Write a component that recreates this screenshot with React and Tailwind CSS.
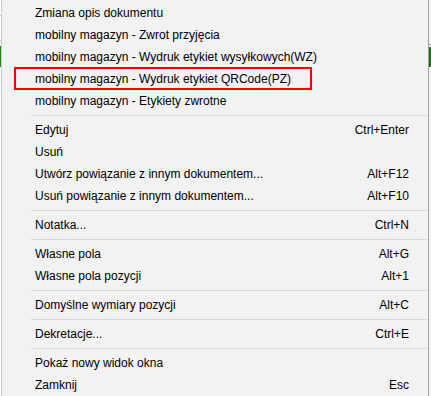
import React from 'react';

const groups = [
    [
        { label: 'Zmiana opis dokumentu' },
        { label: 'mobilny magazyn - Zwrot przyjęcia' },
        { label: 'mobilny magazyn - Wydruk etykiet wysyłkowych(WZ)' },
        { label: 'mobilny magazyn - Wydruk etykiet QRCode(PZ)' },
        { label: 'mobilny magazyn - Etykiety zwrotne' },
    ],
    [
        { label: 'Edytuj', shortcut: 'Ctrl+Enter' },
        { label: 'Usuń' },
        { label: 'Utwórz powiązanie z innym dokumentem...', shortcut: 'Alt+F12' },
        { label: 'Usuń powiązanie z innym dokumentem...', shortcut: 'Alt+F10' },
    ],
    [{ label: 'Notatka...', shortcut: 'Ctrl+N' }],
    [
        { label: 'Własne pola', shortcut: 'Alt+G' },
        { label: 'Własne pola pozycji', shortcut: 'Alt+1' },
    ],
    [{ label: 'Domyślne wymiary pozycji', shortcut: 'Alt+C' }],
    [{ label: 'Dekretacje...', shortcut: 'Ctrl+E' }],
    [
        { label: 'Pokaż nowy widok okna' },
        { label: 'Zamknij', shortcut: 'Esc' },
    ],
];

const MenuItem = ({ label, shortcut }) => (
    <div className="flex h-[22px] items-center justify-between pl-[33px] pr-[19px] text-black">
        <span className="whitespace-nowrap">{label}</span>
        {shortcut && <span className="whitespace-nowrap">{shortcut}</span>}
    </div>
);

const Separator = () => (
    <div className="h-[7px] pt-[3px] pl-[29px] pr-[1px]">
        <div className="h-px bg-[#d7d7d7]" />
    </div>
);

export default function App() {
    return (
        <div
            className="relative flex h-[396px] w-[431px] overflow-hidden bg-white text-[12px]"
            style={{ fontFamily: '"Liberation Sans", Arial, sans-serif' }}
        >
            {/* background app, left edge */}
            <div className="flex w-px flex-col bg-white">
                <div className="mt-[15px] h-px bg-[#c8c8c8]" />
                <div className="mt-[24px] h-px bg-[#c8c8c8]" />
                <div className="mt-[5px] h-[21px] bg-[#1e8a1e]" />
            </div>

            {/* context menu */}
            <div className="flex-1 border-l border-r border-l-[#cccccc] border-r-[#a0a0a0] bg-[#f2f2f2] pt-[2px]">
                {groups.map((group, gi) => (
                    <div key={gi}>
                        {gi > 0 && <Separator />}
                        {group.map((item) => (
                            <MenuItem key={item.label} {...item} />
                        ))}
                    </div>
                ))}
            </div>

            {/* background app, right edge */}
            <div className="flex w-[2px] flex-col bg-[#f7f7f7]">
                <div className="mt-[44px] h-px bg-[#a0a0a0]" />
                <div className="mt-[2px] h-[20px] bg-[#1e6e1e]" />
            </div>

            {/* annotation */}
            <div className="pointer-events-none absolute left-[14px] top-[67px] h-[23px] w-[298px] border-2 border-[#ff0000]" />
        </div>
    );
}
